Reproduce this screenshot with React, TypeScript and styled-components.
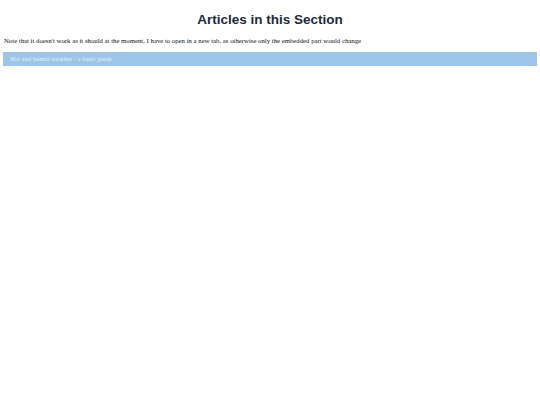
import styled, { createGlobalStyle } from "styled-components";

const Global = createGlobalStyle`
    html, body {
        margin: 0;
        padding: 0;
        background: #ffffff;
    }
    body {
        font-family: "Liberation Serif", "Times New Roman", serif;
    }
`;

const Page = styled.main`
    padding: 0 3px;
    display: flex;
    flex-direction: column;
`;

const Title = styled.h1`
    margin: 12px 0 0;
    font-family: "Liberation Sans", Arial, sans-serif;
    font-size: 13.5px;
    font-weight: bold;
    line-height: 16px;
    text-align: center;
    color: #1a2a3c;
`;

const Note = styled.p`
    margin: 9px 0 0 1px;
    font-size: 6.75px;
    line-height: 8px;
    color: #111111;
`;

const ArticleList = styled.ul`
    list-style: none;
    margin: 7px 0 0;
    padding: 0;
`;

const ArticleLink = styled.a`
    display: block;
    padding: 3px 7px;
    height: 8px;
    line-height: 8px;
    font-size: 6.6px;
    color: #e4eef8;
    text-decoration: none;
    background: #9cc5e7;
`;

export default () => {
    const articles = ["Hot and humid weather - a basic guide"];

    return (
        <>
            <Global />
            <Page>
                <Title>Articles in this Section</Title>
                <Note>
                    Note that it doesn't work as it should at the moment, I have to open in a new tab, as otherwise only the embedded part would change
                </Note>
                <ArticleList>
                    {articles.map((title) => (
                        <li key={title}>
                            <ArticleLink href="#">{title}</ArticleLink>
                        </li>
                    ))}
                </ArticleList>
            </Page>
        </>
    );
};
